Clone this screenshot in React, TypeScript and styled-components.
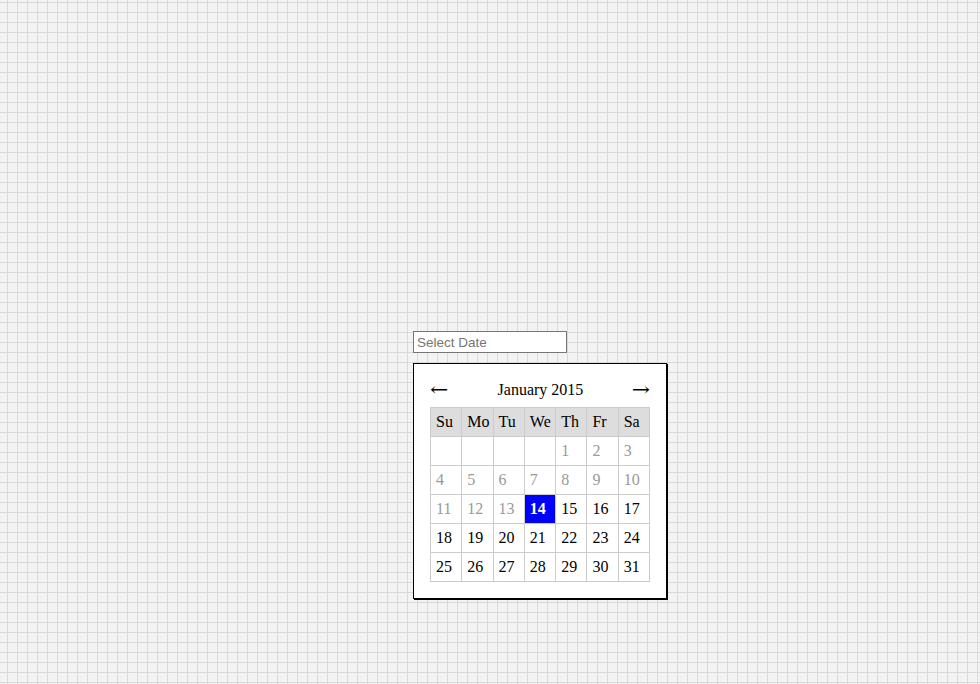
import styled, { createGlobalStyle } from "styled-components";

const GlobalStyle = createGlobalStyle`
  html, body {
    margin: 0;
    padding: 0;
  }

  body {
    min-height: 684px;
    background-color: #f3f3f3;
    background-image:
      linear-gradient(to right, #d9d9d9 1px, transparent 1px),
      linear-gradient(to bottom, #d9d9d9 1px, transparent 1px);
    background-size: 10px 10px;
    background-position: 7px 2px;
    font-family: "Liberation Serif", "Times New Roman", serif;
  }
`;

const Page = styled.div`
  padding: 331px 0 0 413px;
`;

const DateInput = styled.input`
  display: block;
  box-sizing: border-box;
  width: 154px;
  height: 22px;
  margin: 0;
  padding: 1px 3px;
  border: 1px solid #767676;
  border-radius: 0;
  background: #fff;
  font-family: "Liberation Sans", Arial, sans-serif;
  font-size: 13.5px;
  color: #000;
  outline: none;

  &::placeholder {
    color: #757575;
  }
`;

const Picker = styled.div`
  box-sizing: border-box;
  width: 254px;
  margin-top: 10px;
  padding: 16px;
  border: 1px solid #000;
  box-shadow: 1px 1px 0 #000;
  background: #fff;
`;

const Nav = styled.div`
  display: flex;
  align-items: center;
  justify-content: space-between;
  height: 19px;
  margin-bottom: 8px;
  font-size: 16px;
  color: #000;
`;

const Arrow = styled.span<{ $side: "left" | "right" }>`
  width: 24px;
  font-family: "DejaVu Serif", serif;
  font-size: 19px;
  line-height: 19px;
  cursor: pointer;
  text-align: ${(p) => p.$side};
  transform: scaleX(1.15);
  transform-origin: ${(p) => p.$side} center;
`;

const Month = styled.span`
  padding-left: 1px;
`;

const Table = styled.table`
  width: 220px;
  border-collapse: collapse;
  table-layout: fixed;
  font-size: 16px;
`;

const HeadCell = styled.th`
  padding: 5px 0 5px 5px;
  border: 1px solid #ccc;
  background: #ddd;
  font-weight: normal;
  text-align: left;
  line-height: 18px;
  color: #000;
`;

const DayCell = styled.td<{ $muted?: boolean; $selected?: boolean }>`
  padding: 5px 0 5px 5px;
  height: 18px;
  border: 1px solid #ccc;
  line-height: 18px;
  text-align: left;
  color: ${(p) => (p.$selected ? "#fff" : p.$muted ? "#999" : "#000")};
  background: ${(p) => (p.$selected ? "#0000ff" : "#fff")};
  font-weight: ${(p) => (p.$selected ? "bold" : "normal")};
  cursor: pointer;
`;

const weekDays = ["Su", "Mo", "Tu", "We", "Th", "Fr", "Sa"];
const selectedDay = 14;

const buildWeeks = () => {
  const cells: (number | null)[] = [null, null, null, null];
  for (let d = 1; d <= 31; d++) cells.push(d);
  const weeks: (number | null)[][] = [];
  for (let i = 0; i < cells.length; i += 7) {
    weeks.push(cells.slice(i, i + 7));
  }
  return weeks;
};

const App = () => {
  const weeks = buildWeeks();

  return (
    <Page>
      <GlobalStyle />
      <DateInput type="text" placeholder="Select Date" />
      <Picker>
        <Nav>
          <Arrow $side="left">←</Arrow>
          <Month>January 2015</Month>
          <Arrow $side="right">→</Arrow>
        </Nav>
        <Table>
          <thead>
            <tr>
              {weekDays.map((d) => (
                <HeadCell key={d}>{d}</HeadCell>
              ))}
            </tr>
          </thead>
          <tbody>
            {weeks.map((week, i) => (
              <tr key={i}>
                {week.map((day, j) => (
                  <DayCell
                    key={j}
                    $muted={day !== null && day < selectedDay}
                    $selected={day === selectedDay}
                  >
                    {day ?? ""}
                  </DayCell>
                ))}
              </tr>
            ))}
          </tbody>
        </Table>
      </Picker>
    </Page>
  );
};

export default App;
